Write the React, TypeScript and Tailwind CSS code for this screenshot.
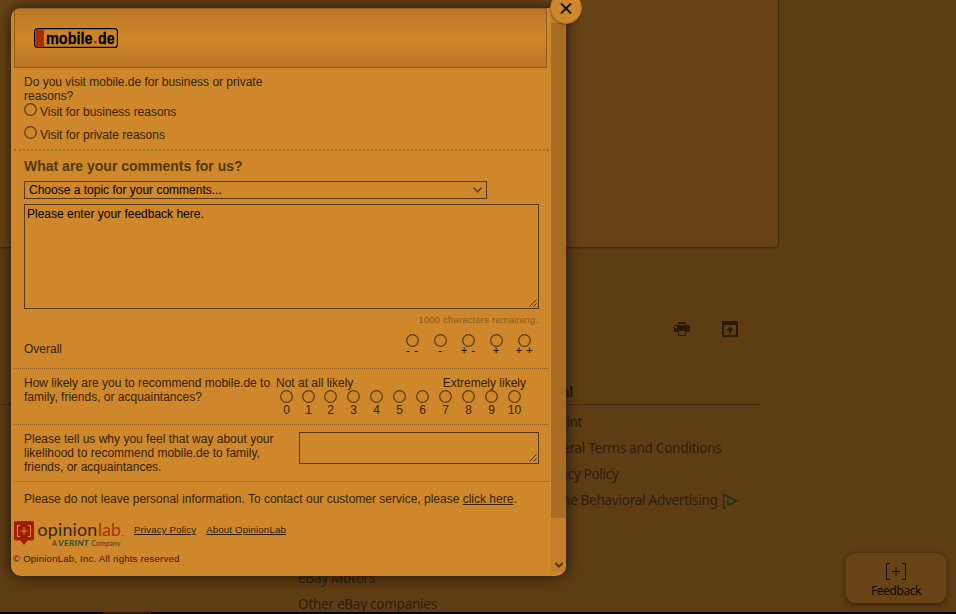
import { ReactNode } from 'react';

function Radio() {
  return (
    <svg className="block h-[13px] w-[13px] shrink-0" viewBox="0 0 13 13" fill="none" stroke="#5e3e14" strokeWidth="1.300">
      <circle cx="6.500" cy="6.500" r="5.800" />
    </svg>
  );
}

function Grip() {
  return (
    <svg className="h-[8px] w-[8px]" viewBox="0 0 8 8" stroke="#3d280d" strokeWidth="0.9" fill="none">
      <path d="M0.5 7.5 7.5 0.5M4.5 7.5 7.5 4.5" />
    </svg>
  );
}

function TextBox({ className, children }: { className: string; children?: ReactNode }) {
  return (
    <div className={'flex items-end justify-between border border-[#56380f] text-black ' + className}>
      <div className="self-start pl-[2px] pt-[2px]">{children}</div>
      <div className="p-px"><Grip /></div>
    </div>
  );
}

const overall = ['- -', '-', '+ -', '+', '+ +'];
const scaleWidths = ['w-[22px]', 'w-[22px]', 'w-[23px]', 'w-[23px]', 'w-[23px]', 'w-[23px]', 'w-[23px]', 'w-[23px]', 'w-[23px]', 'w-[23px]', 'w-[23px]'];

function Background() {
  return (
    <div className="flex h-[614px] w-[956px] flex-col overflow-hidden bg-[#5f3d14] font-['Noto_Sans',sans-serif] text-[13.5px] leading-[26px] tracking-[-0.25px] text-[#2d1d0a]">
      <div className="h-[248px] w-[779px] shrink-0 rounded-br-[5px] border-b border-r border-[#432b0e] bg-[#684316] shadow-[0_1px_1px_#533511]" />
      <div className="flex h-[132px] w-[738px] shrink-0 items-start justify-end gap-8 pt-[73px]">
        <svg className="h-4 w-4" viewBox="0 0 16 16" fill="#2a1b09">
          <path d="M4 1h8v2H4zM1 4h14l1 1v6h-4V9H4v2H0V5z" />
          <path d="M4.500 9.500h7v5h-7z" fill="#5f3d14" stroke="#2a1b09" />
          <path d="M1 5h2v2H1z" fill="#5f3d14" />
        </svg>
        <svg className="h-4 w-4" viewBox="0 0 16 16" fill="#2a1b09">
          <path d="M0 0h16v16H0zM2 4v10h12V4z" fillRule="evenodd" />
          <path d="M8 5.500 11 8.500v1H9v3H7v-3H5v-1z" />
        </svg>
      </div>
      <div className="flex h-[25px] w-[760px] shrink-0 items-center border-b border-[#452c10] pl-[538px] font-bold">
        <span>Legal</span>
      </div>
      <div className="flex pt-[4px]">
        <div className="w-[298px] shrink-0" />
        <div className="w-[239px] shrink-0 pt-[156px]">
          <p>eBay Motors</p>
          <p>Other eBay companies</p>
        </div>
        <div className="whitespace-nowrap">
          <p className="tracking-[-0.4px]">Imprint</p>
          <p>General Terms and Conditions</p>
          <p>Privacy Policy</p>
          <p className="flex items-center gap-1">
            Online Behavioral Advertising
            <svg className="mt-px h-4 w-4" viewBox="0 0 16 16" fill="none" stroke="#153818" strokeWidth="1.500">
              <path d="M4 14.500 1.500 15V1l13 7L7 12M6 6.500v5.500M6 4v1" />
            </svg>
          </p>
        </div>
      </div>
    </div>
  );
}

function Header() {
  return (
    <div className="flex h-[60px] w-[533px] items-center border border-[#8e5c1e] bg-linear-to-b from-[#b97625] via-[#cf872b] to-[#b97625] pl-[19px]">
      <svg className="h-5 w-[84px]" viewBox="0 0 84 20" fontFamily="Liberation Sans, sans-serif" fontWeight="700" fontSize="17">
        <rect x="0.600" y="0.600" width="82.800" height="18.800" rx="3" fill="none" stroke="#000" strokeWidth="1.200" />
        <path d="M1.500 1.500h8.500v17H1.500z" fill="#aa2c03" />
        <text x="12" y="15.500" textLength="46.500" lengthAdjust="spacingAndGlyphs" stroke="#000" strokeWidth="0.300">mobile</text>
        <path d="M60 12.800h2.700v2.700H60z" fill="#c03404" />
        <text x="64" y="15.500" textLength="16.500" lengthAdjust="spacingAndGlyphs" stroke="#000" strokeWidth="0.300">de</text>
      </svg>
    </div>
  );
}

function Brand() {
  return (
    <svg className="h-[28px] w-[112px] overflow-visible" viewBox="0 0 112 28" fontFamily="Lato, sans-serif">
      <path d="M2 0h16q2 0 2 2v15.500q0 2-2 2h-4.500L10 24l-3.500-4.500H2q-2 0-2-2V2q0-2 2-2z" fill="#a11c05" />
      <path d="M6 4.500H3.500v11H6M14 4.500h2.500v11H14M10 6.500v7M6.500 10h7" fill="none" stroke="#d8853a" strokeWidth="1.200" />
      <text x="23.500" y="15" fontSize="17.500" fill="#3a250d" textLength="60" lengthAdjust="spacingAndGlyphs">opinion</text>
      <text x="84" y="15" fontSize="17.500" fill="#a73509" textLength="23" lengthAdjust="spacingAndGlyphs">lab</text>
      <path d="M108 14h1v1h-1z" fill="#a73509" />
      <text x="38" y="25" fontSize="7" fill="#4a3010">A</text>
      <text x="44" y="25" fontSize="7.500" fontWeight="900" fontStyle="italic" fill="#2d5730" textLength="31" lengthAdjust="spacingAndGlyphs">VERINT</text>
      <text x="77.500" y="25" fontSize="7" fill="#4a3010" textLength="29" lengthAdjust="spacingAndGlyphs">Company</text>
    </svg>
  );
}

function Form() {
  return (
    <div className="w-[540px] pl-[3px]">
      <Header />
      <div className="w-[535px]">
        <section className="h-[83px] border-b-2 border-dotted border-[#a86c23] pl-[10px] pt-[7px] tracking-[-0.01px]">
          <p className="w-[250px]">Do you visit mobile.de for business or private reasons?</p>
          <div className="flex gap-[3px]"><Radio /><span className="pt-[2px]">Visit for business reasons</span></div>
          <div className="mt-[7px] flex gap-[3px]"><Radio /><span className="pt-[2px]">Visit for private reasons</span></div>
        </section>
        <section className="h-[218px] border-b border-dotted border-[#8e5c1e] pl-[10px] pt-[7px]">
          <h2 className="h-[23px] text-[14px] font-bold leading-[17px] text-[#553712]">What are your comments for us?</h2>
          <div className="flex h-[18px] w-[463px] items-center justify-between border border-[#56380f] pl-1 pr-1 text-black">
            <span>Choose a topic for your comments...</span>
            <svg className="h-[6px] w-[9px]" viewBox="0 0 9 6" fill="none" stroke="#56380f" strokeWidth="1.500"><path d="m0.500 0.800 4 4 4-4" /></svg>
          </div>
          <TextBox className="mt-[5px] h-[105px] w-[515px]">Please enter your feedback here.</TextBox>
          <p className="mt-1 w-[514px] text-right text-[9.600px] leading-[14px] tracking-[0.13px] text-[#8b5b1d]">1000 characters remaining.</p>
          <div className="flex pt-[7px]">
            <span className="w-[374px] pt-2">Overall</span>
            {overall.map((label) => (
              <div key={label} className="flex w-7 flex-col items-center whitespace-nowrap text-[#201405]">
                <Radio /><span className="text-[10.500px] leading-[7px] [word-spacing:1.5px] [-webkit-text-stroke:0.2px_#201405]">{label}</span>
              </div>
            ))}
          </div>
        </section>
        <section className="flex h-[56px] border-b border-dotted border-[#8e5c1e] pl-[10px] pt-[7px]">
          <p className="w-[252px] shrink-0 whitespace-nowrap">How likely are you to recommend mobile.de to<br />family, friends, or acquaintances?</p>
          <div className="w-[250px]">
            <div className="flex justify-between"><span>Not at all likely</span><span>Extremely likely</span></div>
            <div className="flex">
              {scaleWidths.map((width, i) => (
                <div key={i} className={'shrink-0 ' + width}>
                  <div className="flex w-[21px] flex-col items-center"><Radio /><span>{i}</span></div>
                </div>
              ))}
            </div>
          </div>
        </section>
        <section className="flex h-[57px] border-b border-dotted border-[#8e5c1e] pl-[10px] pt-[7px]">
          <p className="w-[275px] shrink-0">Please tell us why you feel that way about your<br />likelihood to recommend mobile.de to family,<br />friends, or acquaintances.</p>
          <TextBox className="h-[32px] w-[240px]" />
        </section>
        <p className="h-[39px] whitespace-nowrap pl-[10px] pt-[10px]">
          Please do not leave personal information. To contact our customer service, please <span className="underline">click here</span>.
        </p>
      </div>
      <footer className="text-[9.600px] leading-3 tracking-[0.18px] text-[#2b1b07]">
        <div className="flex h-[32px]">
          <Brand />
          <span className="ml-2 mt-[3px] underline">Privacy Policy</span>
          <span className="ml-[10px] mt-[3px] underline">About OpinionLab</span>
        </div>
        <p className="-ml-px tracking-[0.21px]">© OpinionLab, Inc. All rights reserved</p>
      </footer>
    </div>
  );
}

export default function App() {
  return (
    <div className="relative h-[614px] w-[956px] overflow-hidden">
      <Background />
      <div className="absolute left-[11px] top-[8px] flex h-[568px] w-[555px] overflow-hidden rounded-[10px] bg-[#cf872b] font-['Liberation_Sans',Arial,sans-serif] text-[12px] leading-[14px] text-[#342209] shadow-[0_0_15px_rgba(0,0,0,0.7)]">
        <Form />
        <div className="flex h-[564px] w-[15px] flex-col items-center justify-between bg-[#c57e28] pb-1 pt-[15px]">
          <div className="h-[495px] w-full bg-[#a86c23]" />
          <svg className="h-[6px] w-2" viewBox="0 0 8 6" fill="none" stroke="#56380f" strokeWidth="2"><path d="m0.500 1 3.500 3.500L7.500 1" /></svg>
        </div>
      </div>
      <button className="absolute left-[550px] top-[-8px] flex h-8 w-8 items-center justify-center rounded-full border border-[#b07327] bg-[#cf872b] shadow-[0_1px_2px_rgba(0,0,0,0.3)]">
        <svg className="h-3 w-3" viewBox="0 0 12 12" stroke="#150d04" strokeWidth="1.800"><path d="M1 1.500 11 11.500M11 1.500 1 11.500" /></svg>
      </button>
      <button className="absolute left-[846px] top-[553px] flex h-[50px] w-[100px] flex-col items-center rounded-[9px] bg-[#684316] pt-[10px] font-['Noto_Sans',sans-serif] text-[12px] leading-[16px] text-[#120b03] shadow-[0_2px_6px_rgba(0,0,0,0.45)]">
        <svg className="h-[17px] w-5" viewBox="0 0 20 17" fill="none" stroke="#120b03"><path d="M4 0.500H0.500v16H4M16 0.500h3.500v16H16M10 4v9M5.500 8.500h9" /></svg>
        <span className="mt-[3px] tracking-[-0.4px]">Feedback</span>
      </button>
      <div className="absolute bottom-0 left-0 flex h-[2px] w-full bg-black pl-[103px]"><div className="w-12 bg-[#2d1d0a]" /></div>
    </div>
  );
}
